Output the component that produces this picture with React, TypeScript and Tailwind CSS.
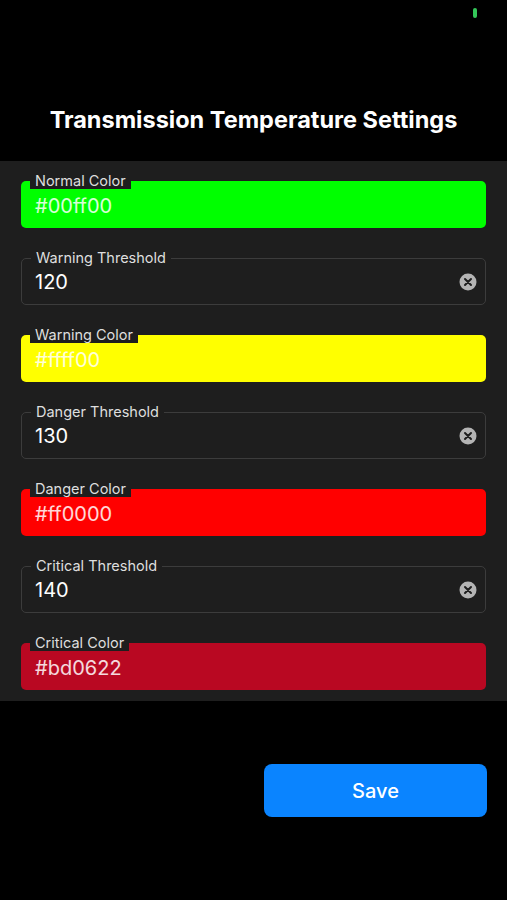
const font = { fontFamily: "Inter, 'Noto Sans', sans-serif" };

type Field =
  | { kind: "color"; label: string; value: string; bg: string }
  | { kind: "number"; label: string; value: string };

const fields: Field[] = [
  { kind: "color", label: "Normal Color", value: "#00ff00", bg: "bg-[#00ff00]" },
  { kind: "number", label: "Warning Threshold", value: "120" },
  { kind: "color", label: "Warning Color", value: "#ffff00", bg: "bg-[#ffff00]" },
  { kind: "number", label: "Danger Threshold", value: "130" },
  { kind: "color", label: "Danger Color", value: "#ff0000", bg: "bg-[#ff0000]" },
  { kind: "number", label: "Critical Threshold", value: "140" },
  { kind: "color", label: "Critical Color", value: "#bd0622", bg: "bg-[#b90822]" },
];

function ClearIcon() {
  return (
    <svg width="18" height="18" viewBox="0 0 18 18">
      <circle cx="9" cy="9" r="8.5" fill="#b4b4b4" />
      <path d="M6 6l6 6M12 6l-6 6" stroke="#1e1e1e" strokeWidth="2" strokeLinecap="round" />
    </svg>
  );
}

function FieldRow({ field }: { field: Field }) {
  if (field.kind === "color") {
    return (
      <div className={`relative flex h-[47px] items-center rounded-[5px] pl-[14px] pt-[3px] ${field.bg}`}>
        <span className="absolute left-[9px] top-[-8px] bg-[#1e1e1e] px-[5px] text-[14.5px] leading-[16px] text-[#dedede]">
          {field.label}
        </span>
        <span className="text-[20px] text-white/85">{field.value}</span>
      </div>
    );
  }
  return (
    <div className="relative flex h-[47px] items-center justify-between rounded-[5px] border border-[#3c3c3c] pl-[13px] pr-[8px] pt-[1px]">
      <span className="absolute left-[9px] top-[-9px] bg-[#1e1e1e] px-[5px] text-[14.5px] leading-[16px] text-[#dedede]">
        {field.label}
      </span>
      <span className="text-[20px] text-white">{field.value}</span>
      <ClearIcon />
    </div>
  );
}

export default function App() {
  return (
    <div className="flex min-h-[900px] flex-col bg-black" style={font}>
      <div className="relative h-[161px] pt-[106px] text-center">
        <div className="absolute right-[30px] top-[8px] h-[10px] w-[4px] rounded-full bg-[#34c759]" />
        <h1 className="text-[23.5px] font-bold leading-[28px] text-white">
          Transmission Temperature Settings
        </h1>
      </div>
      <div className="flex flex-col gap-[30px] bg-[#1e1e1e] px-[21px] pb-[11px] pt-[20px]">
        {fields.map((f) => (
          <FieldRow key={f.label} field={f} />
        ))}
      </div>
      <div className="mt-[63px] flex justify-end pr-[20px]">
        <button className="h-[53px] w-[223px] rounded-[8px] bg-[#0a84ff] text-[20px] font-medium text-white">
          Save
        </button>
      </div>
    </div>
  );
}
